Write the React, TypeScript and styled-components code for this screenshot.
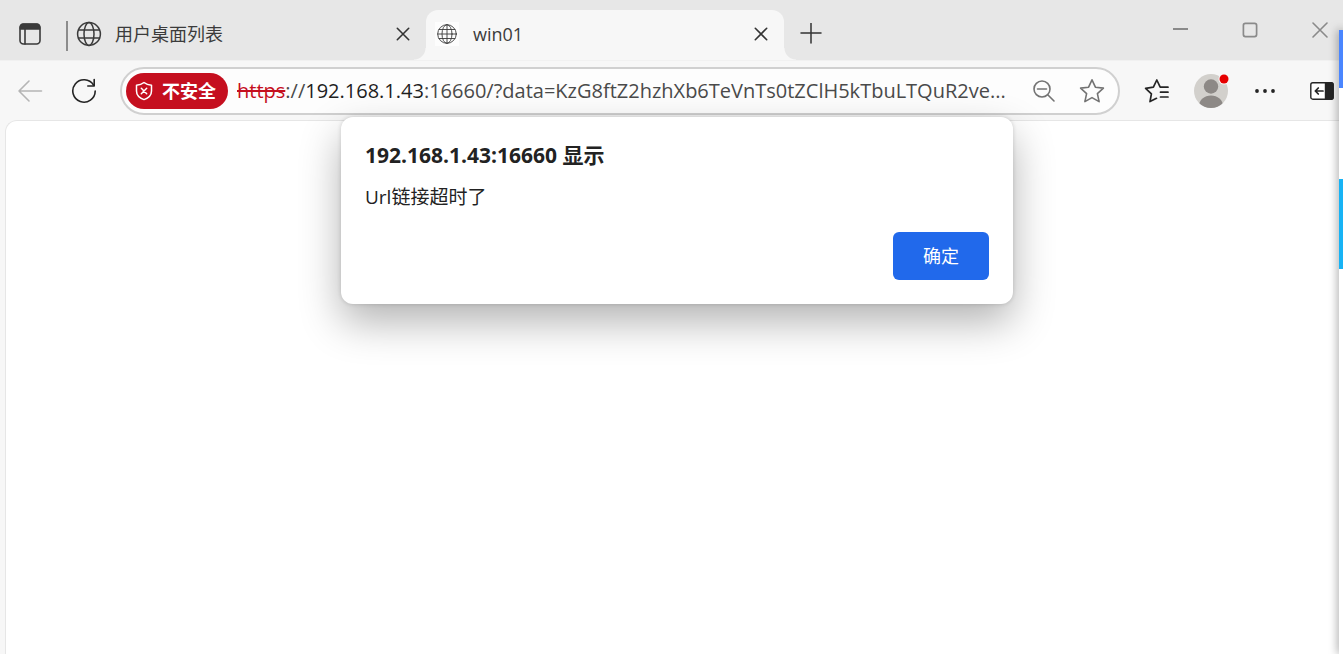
import React from "react";
import styled, { createGlobalStyle } from "styled-components";

const GlobalStyle = createGlobalStyle`
  *, *::before, *::after { box-sizing: border-box; }
  body {
    margin: 0;
    background: #f7f7f7;
    color: #3b3b3b;
    font-family: "Open Sans", "Noto Sans CJK SC", sans-serif;
  }
  button, input { font: inherit; color: inherit; }
`;

const Window = styled.div`
  position: relative;
  display: flex;
  flex-direction: column;
  min-height: 100vh;
  overflow: hidden;
  background: #f7f7f7;
`;

const TabStrip = styled.header`
  display: flex;
  align-items: flex-end;
  height: 60px;
  padding-left: 6px;
  background: #e7e7e7;
`;

const IconButton = styled.button<{ $width?: number; $color?: string }>`
  display: flex;
  flex: none;
  align-items: center;
  justify-content: center;
  width: ${(p) => p.$width ?? 48}px;
  height: 48px;
  padding: 0;
  border: 0;
  border-radius: 6px;
  background: transparent;
  color: ${(p) => p.$color ?? "#333"};
`;

const StripButton = styled(IconButton)`
  height: 52px;
`;

const StripDivider = styled.div`
  flex: none;
  align-self: center;
  width: 2px;
  height: 30px;
  margin: 12px 0 0 12px;
  background: #8c8c8c;
`;

const Tabs = styled.div`
  display: flex;
  flex: 0 1 716px;
  min-width: 0;
`;

const Tab = styled.div<{ $active?: boolean }>`
  position: relative;
  display: flex;
  flex: 1 1 0;
  align-items: center;
  min-width: 0;
  height: 50px;
  padding: 0 13px 2px 7px;
  border-radius: 12px 12px 0 0;
  background: ${(p) => (p.$active ? "#f7f7f7" : "transparent")};

  &::before,
  &::after {
    content: "";
    display: ${(p) => (p.$active ? "block" : "none")};
    position: absolute;
    bottom: 0;
    width: 12px;
    height: 12px;
  }
  &::before {
    right: 100%;
    background: radial-gradient(circle at 0 0, transparent 11px, #f7f7f7 12px);
  }
  &::after {
    left: 100%;
    background: radial-gradient(circle at 100% 0, transparent 11px, #f7f7f7 12px);
  }
`;

const TabLabel = styled.button`
  display: flex;
  flex: 1;
  align-items: center;
  gap: 12px;
  min-width: 0;
  height: 48px;
  padding: 0;
  border: 0;
  background: transparent;
  font-size: 18px;
  line-height: 24px;
  text-align: left;
`;

const Favicon = styled.span`
  display: flex;
  flex: none;
  align-items: center;
  justify-content: center;
  width: 28px;
  height: 24px;
`;

const FaviconTile = styled.span`
  display: flex;
  padding: 2px;
  background: #fdfdfd;
`;

const WindowControls = styled.div`
  display: flex;
  align-self: flex-start;
  gap: 24px;
  margin-left: auto;
  padding-top: 6px;
`;

const Toolbar = styled.nav`
  display: flex;
  align-items: center;
  height: 60px;
  padding-left: 6px;
  border-top: 1px solid #f1f1f1;
`;

const HistoryButtons = styled.div`
  display: flex;
  gap: 6px;
`;

const AddressBar = styled.form`
  display: flex;
  flex: 1;
  align-items: center;
  min-width: 0;
  height: 48px;
  margin: 0 16px 0 12px;
  padding: 0 2px 0 4px;
  border: 2px solid #d0d0d0;
  border-radius: 24px;
  background: #fdfdfd;
  font-size: 20px;
  line-height: 30px;
`;

const SecurityBadge = styled.button`
  display: flex;
  flex: none;
  align-items: center;
  gap: 8px;
  width: 102px;
  height: 36px;
  margin-right: 9px;
  padding: 0 0 0 8px;
  border: 0;
  border-radius: 18px;
  background: #c50f1f;
  color: #fff;
  font-size: 18px;
  font-weight: 700;
  line-height: 24px;
  white-space: nowrap;
`;

const Origin = styled.label`
  flex: none;
  color: #4a4a4a;
`;

const Scheme = styled.s`
  color: #c50f1f;
`;

const Host = styled.span`
  color: #1f1f1f;
`;

const AddressInput = styled.input`
  flex: 1;
  min-width: 0;
  height: 30px;
  padding: 0;
  border: 0;
  outline: 0;
  background: transparent;
  color: #4a4a4a;
  text-overflow: ellipsis;
`;

const ToolGroup = styled.div`
  display: flex;
  gap: 12px;
  margin-right: 15px;
`;

const Page = styled.main`
  flex: 1;
  margin-left: 5px;
  border: 1px solid #e6e6e6;
  border-width: 1px 0 0 1px;
  border-radius: 12px 0 0 0;
  background: #fff;
`;

const DialogLayer = styled.div`
  position: absolute;
  top: 117px;
  left: 11px;
  right: 0;
  display: flex;
  justify-content: center;
`;

const Dialog = styled.section`
  display: flex;
  flex-direction: column;
  width: 672px;
  max-width: 90%;
  padding: 24px;
  border-radius: 12px;
  background: #fff;
  box-shadow: 0 18px 42px rgba(0, 0, 0, 0.3), 0 0 4px rgba(0, 0, 0, 0.16);
  color: #222;
`;

const DialogTitle = styled.h1`
  margin: 0 0 14px;
  font-size: 21px;
  font-weight: 700;
  line-height: 28px;
`;

const DialogText = styled.p`
  margin: 0 0 21px;
  font-size: 19px;
  line-height: 28px;
`;

const ConfirmButton = styled.button`
  align-self: flex-end;
  width: 96px;
  height: 48px;
  padding: 0;
  border: 0;
  border-radius: 6px;
  background: #2169eb;
  color: #fff;
  font-size: 18px;
  line-height: 24px;
`;

const NeighbourWindow = styled.aside`
  position: absolute;
  top: 30px;
  right: 0;
  bottom: 0;
  width: 4px;
  background: linear-gradient(#4a86ff 58px, #fff 58px 149px, #17b3f5 149px 239px, #fff 239px);
  box-shadow: 0 0 10px rgba(0, 0, 0, 0.6);
`;

type IconProps = { size?: number; stroke?: number; children: React.ReactNode };

const Icon = ({ size = 24, stroke = 2, children }: IconProps) => (
  <svg
    width={size}
    height={size}
    viewBox={`0 0 ${size} ${size}`}
    fill="none"
    stroke="currentColor"
    strokeWidth={stroke}
    strokeLinecap="round"
    strokeLinejoin="round"
    aria-hidden="true"
  >
    {children}
  </svg>
);

const CloseIcon = () => (
  <Icon size={14} stroke={1.6}>
    <path d="M1.3 1.3 12.7 12.7M12.7 1.3 1.3 12.7" />
  </Icon>
);

const GlobeIcon = () => (
  <Icon size={26} stroke={1.5}>
    <circle cx="13" cy="13" r="11.4" />
    <ellipse cx="13" cy="13" rx="5" ry="11.4" />
    <path d="M2.5 9H23.5M2.5 17H23.5" />
  </Icon>
);

const GridGlobeIcon = () => (
  <Icon size={20} stroke={0.9}>
    <circle cx="10" cy="10" r="9.3" />
    <ellipse cx="10" cy="10" rx="5" ry="9.3" />
    <path d="M10 .7V19.3M.7 10H19.3M2 5.5H18M2 14.5H18" />
  </Icon>
);

const App = () => (
  <>
    <GlobalStyle />
    <Window>
      <TabStrip>
        <StripButton aria-label="标签页操作" $color="#3a3a3a">
          <Icon size={22} stroke={1.6}>
            <rect x="1" y="1" width="20" height="20" rx="3.5" />
            <path d="M1.5 6V4Q1.5 1.3 4 1.3H18Q20.5 1.3 20.5 4V6Z" fill="currentColor" />
            <path d="M6 6V21" />
          </Icon>
        </StripButton>
        <StripDivider />
        <Tabs role="tablist">
          <Tab>
            <TabLabel role="tab" aria-selected="false">
              <Favicon>
                <GlobeIcon />
              </Favicon>
              用户桌面列表
            </TabLabel>
            <IconButton $width={20} aria-label="关闭标签页">
              <CloseIcon />
            </IconButton>
          </Tab>
          <Tab $active>
            <TabLabel role="tab" aria-selected="true">
              <Favicon>
                <FaviconTile>
                  <GridGlobeIcon />
                </FaviconTile>
              </Favicon>
              win01
            </TabLabel>
            <IconButton $width={20} aria-label="关闭标签页">
              <CloseIcon />
            </IconButton>
          </Tab>
        </Tabs>
        <StripButton $width={54} aria-label="新建标签页">
          <Icon size={22} stroke={1.5}>
            <path d="M11 0V20M1 10H21" />
          </Icon>
        </StripButton>
        <WindowControls>
          <IconButton $width={46} aria-label="最小化" $color="#8a8a8a">
            <Icon size={16}>
              <path d="M1 7H16" strokeLinecap="butt" />
            </Icon>
          </IconButton>
          <IconButton $width={46} aria-label="最大化" $color="#8a8a8a">
            <Icon size={16} stroke={1.7}>
              <rect x="1.4" y="1.4" width="13.2" height="13.2" rx="2" />
            </Icon>
          </IconButton>
          <IconButton $width={46} aria-label="关闭" $color="#8a8a8a">
            <Icon size={16} stroke={1.6}>
              <path d="M1 1 15 15M15 1 1 15" />
            </Icon>
          </IconButton>
        </WindowControls>
      </TabStrip>

      <Toolbar>
        <HistoryButtons>
          <IconButton aria-label="后退" $color="#b5b5b5">
            <Icon size={26} stroke={1.6}>
              <path d="M12 3 2 13 12 23M2 13H24.5" />
            </Icon>
          </IconButton>
          <IconButton aria-label="刷新" $color="#242424">
            <Icon size={26} stroke={1.6}>
              <path d="M22.5 7A11.2 11.2 0 1 0 24.2 13" />
              <path d="M23.2 1.5V8H16.8" />
            </Icon>
          </IconButton>
        </HistoryButtons>

        <AddressBar onSubmit={(e) => e.preventDefault()}>
          <SecurityBadge type="button">
            <Icon size={20} stroke={1.5}>
              <path d="M10 1.5Q13 4 17.5 4.2V10C17.5 14.5 14.5 17 10 18.6C5.5 17 2.5 14.5 2.5 10V4.2Q7 4 10 1.5Z" />
              <path d="M7.3 7.3 12.7 12.7M12.7 7.3 7.3 12.7" />
            </Icon>
            不安全
          </SecurityBadge>
          <Origin htmlFor="address">
            <Scheme>https</Scheme>://<Host>192.168.1.43</Host>
          </Origin>
          <AddressInput
            id="address"
            type="text"
            defaultValue=":16660/?data=KzG8ftZ2hzhXb6TeVnTs0tZClH5kTbuLTQuR2ve..."
          />
          <IconButton type="button" aria-label="缩小" $color="#737373">
            <Icon stroke={1.6}>
              <circle cx="10" cy="10" r="8" />
              <path d="M5.5 10H14.5M16 16 22 22" />
            </Icon>
          </IconButton>
          <IconButton type="button" aria-label="收藏此页" $color="#737373">
            <Icon size={26} stroke={1.6}>
              <path d="M13 1.8 16.4 9.2 24.4 10.1 18.4 15.6 20.1 23.6 13 19.6 5.9 23.6 7.6 15.6 1.6 10.1 9.6 9.2Z" />
            </Icon>
          </IconButton>
        </AddressBar>

        <ToolGroup>
          <IconButton $width={42} aria-label="收藏夹" $color="#242424">
            <Icon size={26} stroke={1.7}>
              <path d="M24 9.2H16.2L12.8 2 9.4 9.2 1.6 10.3 7.4 15.8 6 23.6 12.5 20.3M16.5 14.2H24M16.5 19H24" />
            </Icon>
          </IconButton>
          <IconButton $width={42} aria-label="个人资料">
            <svg width="42" height="42" viewBox="0 0 42 42" aria-hidden="true">
              <defs>
                <clipPath id="avatar">
                  <circle cx="21" cy="21" r="17" />
                </clipPath>
              </defs>
              <circle cx="21" cy="21" r="17" fill="#d2d0cc" />
              <g clipPath="url(#avatar)" fill="#8d8986">
                <circle cx="21" cy="16.5" r="7.2" />
                <ellipse cx="21" cy="36" rx="12" ry="10.5" />
              </g>
              <circle cx="34" cy="9" r="5.5" fill="#f7f7f7" />
              <circle cx="34" cy="9" r="4.5" fill="#e60000" />
            </svg>
          </IconButton>
          <IconButton $width={42} aria-label="设置及其他" $color="#242424">
            <svg width="22" height="6" viewBox="0 0 22 6" fill="currentColor" aria-hidden="true">
              <circle cx="3" cy="3" r="1.9" />
              <circle cx="11" cy="3" r="1.9" />
              <circle cx="19" cy="3" r="1.9" />
            </svg>
          </IconButton>
        </ToolGroup>
        <IconButton $width={42} aria-label="侧边栏" $color="#242424">
          <Icon stroke={1.4}>
            <rect x=".8" y="3.8" width="22.4" height="16.4" rx="2" fill="#fff" />
            <path d="M15.5 4H21.5Q23 4 23 5.5V18.5Q23 20 21.5 20H15.5Z" fill="currentColor" />
            <path d="M13 12H5.5M8.3 9 5.3 12 8.3 15" strokeWidth="1.7" />
          </Icon>
        </IconButton>
      </Toolbar>

      <Page />

      <DialogLayer>
        <Dialog role="alertdialog" aria-labelledby="dialog-title" aria-describedby="dialog-text">
          <DialogTitle id="dialog-title">192.168.1.43:16660 显示</DialogTitle>
          <DialogText id="dialog-text">Url链接超时了</DialogText>
          <ConfirmButton type="button">确定</ConfirmButton>
        </Dialog>
      </DialogLayer>
      <NeighbourWindow aria-hidden="true" />
    </Window>
  </>
);

export default App;
